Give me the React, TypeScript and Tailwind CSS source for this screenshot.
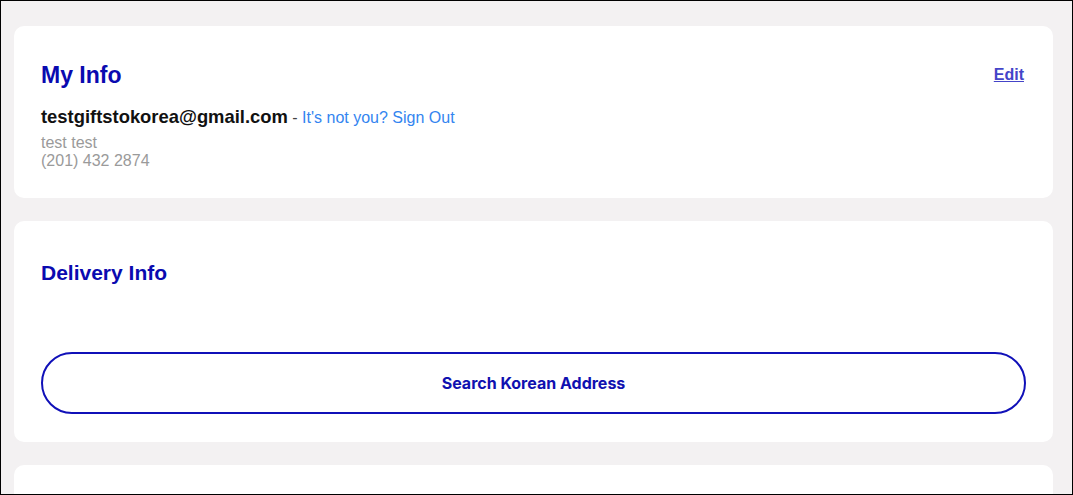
import React from "react";

// Checkout account page: my info + delivery info cards

const InfoCard: React.FC<{ className?: string; children?: React.ReactNode }> = ({
  className = "",
  children,
}) => (
  <div className={`bg-white rounded-[10px] px-[27px] ${className}`}>{children}</div>
);

export default function App() {
  return (
    <div
      className="h-[495px] w-[1073px] overflow-hidden border border-black bg-[#f3f1f2] pl-[13px] pr-[19px] pt-[25px] leading-[1.15]"
      style={{ fontFamily: '"Liberation Sans", Arial, sans-serif' }}
    >
      <div className="flex flex-col gap-[23px]">
        {/* My Info */}
        <InfoCard className="pt-[36px] pb-[27px]">
          <div className="flex items-center justify-between">
            <h2 className="text-[23px] font-bold text-[#0a0ab0]">My Info</h2>
            <a href="#" className="mr-[2px] text-[16px] font-bold text-[#4444c8] underline">
              Edit
            </a>
          </div>
          <p className="mt-[18px] text-[16px]">
            <span className="text-[18.4px] font-bold text-[#111111]">
              testgiftstokorea@gmail.com
            </span>{" "}
            <span className="text-[#444444]">-</span>{" "}
            <a href="#" className="text-[#3385f0]">
              It's not you? Sign Out
            </a>
          </p>
          <div className="mt-[6px] text-[16px] text-[#9a9a9a]">
            <div>test test</div>
            <div>(201) 432 2874</div>
          </div>
        </InfoCard>

        {/* Delivery Info */}
        <InfoCard className="pt-[40px] pb-[28px]">
          <h2 className="text-[21px] font-bold text-[#0a0ab0]">Delivery Info</h2>
          <button
            className="mt-[67px] flex h-[62px] w-full items-center justify-center rounded-full border-2 border-[#1010b8] text-[16px] font-bold text-[#1010b0]"
            style={{ fontFamily: "Inter, sans-serif" }}
          >
            Search Korean Address
          </button>
        </InfoCard>

        {/* next section (cut off) */}
        <InfoCard className="h-[120px]" />
      </div>
    </div>
  );
}
